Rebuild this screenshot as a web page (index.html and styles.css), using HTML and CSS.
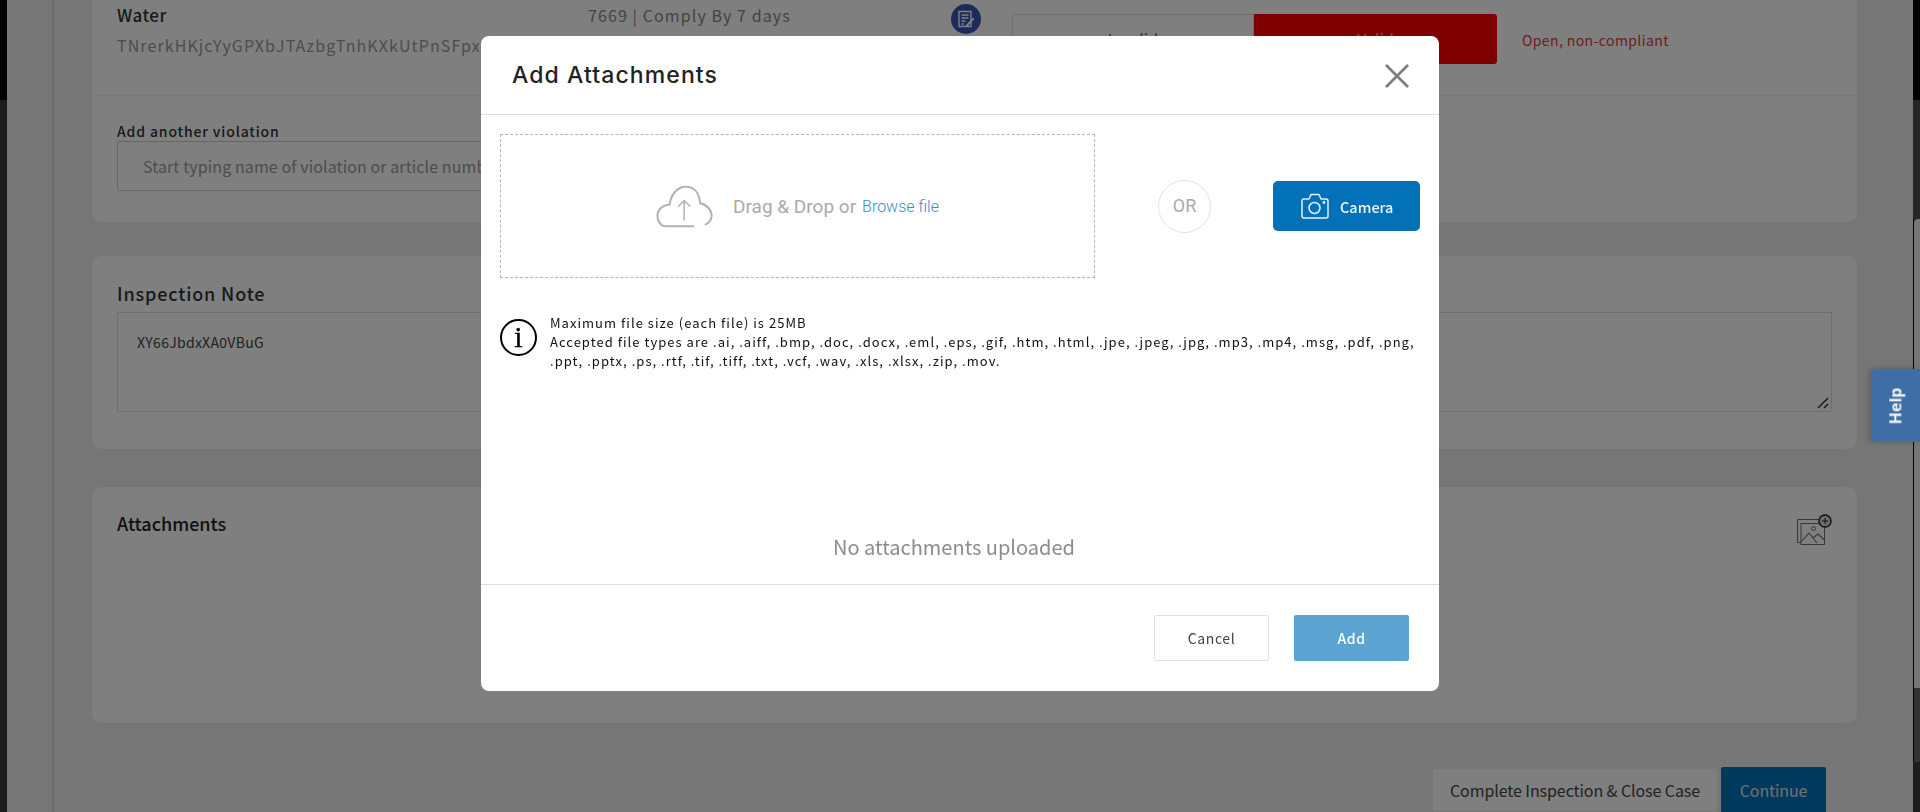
FILE: index.html
```html
<!DOCTYPE html>
<html>
<head>
    <title>Inspection - Add Attachments</title>
    <link rel="stylesheet" href="styles.css">
</head>
<body>
    <div class="shell">
        <div class="edge-left"><div class="edge-top"></div></div>
        <div class="rail"></div>

        <main class="content">
            <section class="card violations">
                <div class="violation-row">
                    <div class="violation-name">
                        <div class="water">Water</div>
                        <div class="violation-code">TNrerkHKjcYyGPXbJTAzbgTnhKXkUtPnSFpxQwLm</div>
                    </div>
                    <div class="comply">7669 | Comply By 7 days</div>
                    <svg class="note-icon" viewBox="0 0 30 30">
                        <circle cx="15" cy="15" r="15" fill="#3a55b4"/>
                        <path d="M8 7.5h12v15H8z" fill="none" stroke="#fff" stroke-width="1.4"/>
                        <path d="M10.5 11h7M10.5 14h7M10.5 17h4M10.5 20h2.5" stroke="#fff" stroke-width="1.3"/>
                        <path d="M15 21l7-7.5 1.5 1.5-7 7.5-2 .5z" fill="#fff"/>
                    </svg>
                    <div class="toggle">
                        <button class="toggle-btn">Invalid</button>
                        <button class="toggle-btn toggle-on">Valid</button>
                    </div>
                    <div class="status">Open, non-compliant</div>
                </div>
                <div class="add-violation">
                    <label class="small-label">Add another violation</label>
                    <div class="fake-input">Start typing name of violation or article number</div>
                </div>
            </section>

            <section class="card note-card">
                <h3 class="note-title">Inspection Note</h3>
                <div class="note-box">
                    XY66JbdxXA0VBuG
                    <svg class="resizer" viewBox="0 0 12 12">
                        <path d="M1 11L11 1M7 11l4-4" stroke="#1c1c1c" stroke-width="1.2"/>
                    </svg>
                </div>
            </section>

            <section class="card attach-card">
                <h3 class="attach-title">Attachments</h3>
                <svg class="attach-icon" viewBox="0 0 35 31" fill="none" stroke="#6e6e6e" stroke-width="1">
                    <path d="M25 5.5H.5v23H4"/>
                    <rect x="4" y="9.5" width="23.5" height="21"/>
                    <path d="M4 28l8-9 8 10M16 24l5-4 6.5 6" stroke-width="1.1"/>
                    <circle cx="16.5" cy="14.5" r="2"/>
                    <circle cx="28" cy="7" r="6" fill="#ddd" stroke="#222" stroke-width="1.5"/>
                    <path d="M25 7h6M28 4v6" stroke="#222"/>
                </svg>
            </section>

            <div class="page-actions">
                <button class="btn-close-case">Complete Inspection &amp; Close Case</button>
                <button class="btn-continue">Continue</button>
            </div>
        </main>

        <div class="edge-right">
            <div class="edge-black"></div>
            <div class="edge-track"></div>
            <div class="edge-thumb"></div>
            <div class="edge-low"></div>
        </div>
    </div>

    <div class="overlay">
        <div class="modal">
            <div class="modal-header">
                <h2 class="modal-title">Add Attachments</h2>
                <svg class="close-icon" viewBox="0 0 24 24">
                    <path d="M1 1l22 22M23 1L1 23" stroke="#7f7f7f" stroke-width="2.8"/>
                </svg>
            </div>

            <div class="modal-body">
                <div class="upload-row">
                    <div class="dropzone">
                        <svg class="cloud-icon" viewBox="48 42 170 130" fill="none" stroke="#b2b2b2" stroke-linecap="round">
                            <path stroke-width="6" d="M160 167H78C60 167 51 150 51 135C51 118 65 103 88 101C92 70 112 47 137 47C165 47 178 70 180 97C200 100 215 118 215 135C215 148 208 156 197 161"/>
                            <path stroke-width="4.5" d="M132 148V90M115 106L132 89L150 106"/>
                        </svg>
                        <span class="drag-text">Drag &amp; Drop or</span>
                        <a class="browse-link">Browse file</a>
                    </div>
                    <div class="or-circle">OR</div>
                    <button class="btn-camera">
                        <svg class="camera-icon" viewBox="0 0 28 26" fill="none" stroke="#e6f1f8" stroke-width="1.5">
                            <path d="M3 6h5l2-4.5h8L20 6h5a2 2 0 0 1 2 2v15a2 2 0 0 1-2 2H3a2 2 0 0 1-2-2V8a2 2 0 0 1 2-2z" stroke-linejoin="round"/>
                            <circle cx="13.5" cy="15" r="5.5"/>
                            <circle cx="23" cy="9.5" r=".7" fill="#e6f1f8"/>
                        </svg>
                        Camera
                    </button>
                </div>

                <div class="file-info">
                    <div class="info-icon">i</div>
                    <p class="info-text">Maximum file size (each file) is 25MB<br>
                    Accepted file types are .ai, .aiff, .bmp, .doc, .docx, .eml, .eps, .gif, .htm, .html, .jpe, .jpeg, .jpg, .mp3, .mp4, .msg, .pdf, .png, .ppt, .pptx, .ps, .rtf, .tif, .tiff, .txt, .vcf, .wav, .xls, .xlsx, .zip, .mov.</p>
                </div>

                <div class="no-files">No attachments uploaded</div>
            </div>

            <div class="modal-footer">
                <button class="btn-cancel">Cancel</button>
                <button class="btn-add">Add</button>
            </div>
        </div>
    </div>

    <div class="help-tab"><span>Help</span></div>
</body>
</html>
```

FILE: styles.css
```css
* {
    box-sizing: border-box;
}
html, body {
    margin: 0;
    height: 100%;
    overflow: hidden;
}
body {
    font-family: "Noto Sans CJK JP", "Noto Sans", sans-serif;
    background-color: #ececec;
    color: #333;
}
button {
    font-family: inherit;
    cursor: pointer;
}

/* page behind the dialog */
.shell {
    display: flex;
    height: 812px;
    overflow: hidden;
}
.edge-left {
    width: 7px;
    background: #383838;
}
.edge-top {
    height: 100px;
    background: #000;
}
.rail {
    width: 47px;
    border-right: 2px solid #d4d4d4;
    flex-shrink: 0;
}
.content {
    width: 1859px;
    padding-left: 38px;
    padding-right: 56px;
}
.card {
    background: #fff;
    border-radius: 0 0 10px 10px;
}
.note-card, .attach-card {
    border-radius: 10px;
    margin-top: 34px;
}
.violations {
    height: 222px;
}
.violation-row {
    display: flex;
    height: 96px;
    border-bottom: 1px solid #f0f0f0;
    padding-left: 25px;
    position: relative;
}
.violation-name {
    width: 471px;
    flex-shrink: 0;
    overflow: hidden;
    white-space: nowrap;
}
.water {
    font-size: 17px;
    font-weight: 500;
    line-height: 20px;
    margin-top: 5px;
    letter-spacing: 0.5px;
    color: #333;
}
.violation-code {
    font-size: 16px;
    line-height: 24px;
    margin-top: 8px;
    letter-spacing: 1.1px;
    color: #999;
}
.comply {
    width: 363px;
    flex-shrink: 0;
    font-size: 16px;
    line-height: 20px;
    margin-top: 5px;
    letter-spacing: 1.1px;
    color: #888;
}
.note-icon {
    width: 30px;
    height: 30px;
    margin-top: 4px;
    flex-shrink: 0;
}
.toggle {
    display: flex;
    margin-left: 31px;
    margin-top: 14px;
    height: 50px;
}
.toggle-btn {
    width: 242px;
    height: 50px;
    border: 1px solid #ddd;
    border-radius: 3px 0 0 3px;
    background: #fff;
    font-size: 16px;
    color: #666;
}
.toggle-on {
    width: 243px;
    background: #ff0000;
    border: none;
    border-radius: 0 3px 3px 0;
    color: #ffa8a8;
}
.status {
    margin-left: 25px;
    margin-top: 29px;
    font-size: 14px;
    line-height: 22px;
    letter-spacing: 0.4px;
    color: #e03a3a;
}
.add-violation {
    padding: 26px 25px 0;
}
.small-label {
    display: block;
    font-size: 14px;
    line-height: 18px;
    font-weight: 500;
    letter-spacing: 0.85px;
    color: #333;
}
.fake-input {
    width: 800px;
    height: 50px;
    margin-top: 1px;
    border: 1px solid #ccc;
    border-radius: 2px;
    padding-left: 25px;
    font-size: 16px;
    line-height: 48px;
    letter-spacing: 0.1px;
    white-space: nowrap;
    color: #999;
}
.note-card {
    height: 193px;
    padding: 24px 25px 0;
}
.note-title {
    margin: 0;
    font-size: 18px;
    font-weight: 500;
    line-height: 26px;
    letter-spacing: 0.85px;
    color: #333;
}
.note-box {
    position: relative;
    height: 100px;
    margin-top: 6px;
    border: 1px solid #ddd;
    padding: 17px 19px;
    font-size: 14px;
    line-height: 24px;
    letter-spacing: 0.3px;
    color: #444;
}
.resizer {
    position: absolute;
    right: 2px;
    bottom: 2px;
    width: 12px;
    height: 12px;
}
.attach-card {
    display: flex;
    justify-content: space-between;
    height: 236px;
    margin-top: 38px;
    padding: 24px 25px 0;
}
.attach-title {
    margin: 0;
    font-size: 18px;
    font-weight: 500;
    line-height: 24px;
    color: #222;
}
.attach-icon {
    width: 35px;
    height: 31px;
    margin-top: 3px;
}
.page-actions {
    display: flex;
    justify-content: flex-end;
    align-items: flex-start;
    gap: 3px;
    margin-top: 44px;
    padding-right: 31px;
}
.btn-close-case {
    width: 286px;
    height: 44px;
    margin-top: 1px;
    border: 1px solid #eee;
    background: #fff;
    font-size: 16px;
    letter-spacing: -0.08px;
    color: #444;
}
.btn-continue {
    width: 105px;
    height: 46px;
    border: none;
    border-radius: 2px 2px 0 0;
    background: #0072bc;
    font-size: 16px;
    letter-spacing: -0.1px;
    color: #e0e0e0;
}
.edge-right {
    width: 7px;
    flex-shrink: 0;
    background: #383838;
}
.edge-black {
    height: 100px;
    background: #000;
}
.edge-track {
    height: 119px;
    background: #4c4c4c;
}
.edge-thumb {
    height: 469px;
    border-left: 1px solid #000;
    background: #ececec;
    border-radius: 4px 0 0 0;
}
.edge-low {
    height: 74px;
    border-left: 1px solid #000;
    background: #666;
}

/* dialog */
.overlay {
    position: fixed;
    inset: 0;
    display: flex;
    justify-content: center;
    align-items: flex-start;
    padding-top: 36px;
    background: rgba(0, 0, 0, 0.5);
}
.modal {
    width: 958px;
    height: 655px;
    display: flex;
    flex-direction: column;
    background: #fff;
    border-radius: 8px;
}
.modal-header {
    display: flex;
    justify-content: space-between;
    align-items: center;
    height: 79px;
    flex-shrink: 0;
    padding: 0 30px 0 31px;
    border-bottom: 1px solid #dedede;
}
.modal-title {
    margin: 0;
    font-family: Inter, "Open Sans", sans-serif;
    font-size: 23px;
    font-weight: 500;
    letter-spacing: 1.1px;
    color: #222;
}
.close-icon {
    width: 24px;
    height: 24px;
    margin-top: 2px;
}
.modal-body {
    flex: 1;
    padding: 19px 19px 0;
    min-height: 0;
}
.upload-row {
    display: flex;
    align-items: center;
}
.dropzone {
    display: flex;
    align-items: center;
    justify-content: center;
    width: 595px;
    height: 144px;
    flex-shrink: 0;
    border: 1px dashed #b5b5b5;
    font-family: Roboto, sans-serif;
}
.cloud-icon {
    width: 57px;
    height: 43px;
    margin-right: 20px;
}
.drag-text {
    font-size: 19px;
    color: #aaa;
    margin-right: 6px;
}
.browse-link {
    font-size: 16px;
    font-weight: 300;
    color: #2f8fce;
}
.or-circle {
    width: 53px;
    height: 53px;
    margin-left: 63px;
    border: 1px solid #e2e2e2;
    border-radius: 50%;
    text-align: center;
    line-height: 49px;
    font-family: Roboto, sans-serif;
    font-size: 18px;
    color: #aaa;
    flex-shrink: 0;
}
.btn-camera {
    display: flex;
    align-items: center;
    gap: 11px;
    width: 147px;
    height: 50px;
    margin-left: 62px;
    padding: 0 0 0 28px;
    border: none;
    border-radius: 5px;
    background: #0271b8;
    font-size: 14.5px;
    font-weight: 500;
    color: #eaf4fa;
}
.camera-icon {
    width: 28px;
    height: 26px;
}
.file-info {
    display: flex;
    align-items: flex-start;
    margin-top: 35px;
}
.info-icon {
    width: 37px;
    height: 37px;
    margin-top: 6px;
    flex-shrink: 0;
    border: 2.5px solid #000;
    border-radius: 50%;
    text-align: center;
    font-family: "Liberation Serif", serif;
    font-size: 30px;
    line-height: 31px;
    -webkit-text-stroke: 0.4px #000;
    color: #000;
}
.info-text {
    margin: 0 0 0 13px;
    font-size: 13px;
    line-height: 19px;
    letter-spacing: 1.03px;
    color: #111;
}
.no-files {
    margin-top: 162px;
    padding-right: 12px;
    text-align: center;
    font-size: 20px;
    line-height: 30px;
    color: #8c8c8c;
}
.modal-footer {
    display: flex;
    justify-content: flex-end;
    gap: 25px;
    height: 107px;
    flex-shrink: 0;
    padding: 30px 30px 0 0;
    border-top: 1px solid #dedede;
}
.btn-cancel, .btn-add {
    width: 115px;
    height: 46px;
    border-radius: 2px;
    font-size: 14px;
    letter-spacing: 0.6px;
}
.btn-cancel {
    border: 1px solid #e2e2e2;
    background: #fff;
    color: #444;
}
.btn-add {
    border: none;
    background: #5ba4d1;
    color: #fff;
    font-weight: 500;
}

/* help tab sits above the overlay */
.help-tab {
    position: fixed;
    right: 0;
    top: 369px;
    width: 49px;
    height: 73px;
    display: flex;
    align-items: center;
    justify-content: center;
    background: #3f6ea6;
    border-radius: 4px 0 0 4px;
    box-shadow: -2px 0 6px rgba(0, 0, 0, 0.2);
}
.help-tab span {
    transform: rotate(-90deg);
    font-family: "Open Sans", sans-serif;
    font-size: 16px;
    font-weight: 700;
    color: #f2f2f2;
}
```
